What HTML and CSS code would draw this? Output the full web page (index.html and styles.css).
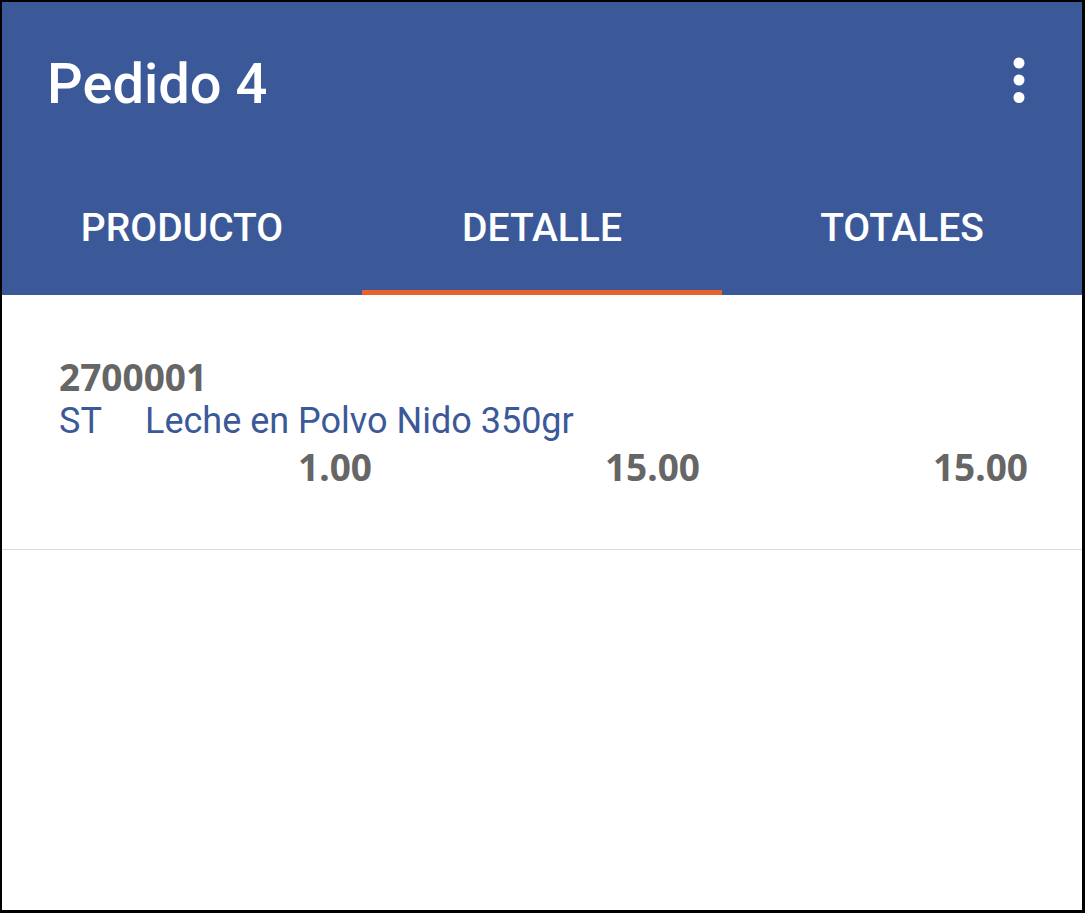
FILE: index.html
```html
<!DOCTYPE html>
<html lang="es">
<head>
<meta charset="utf-8">
<title>Pedido 4</title>
<link rel="stylesheet" href="styles.css">
</head>
<body>
<div class="app">
  <header class="appbar">
    <div class="toolbar">
      <h1 class="title">Pedido 4</h1>
      <svg class="kebab" width="24" height="48" viewBox="0 0 24 48" aria-hidden="true">
        <circle cx="12" cy="7" r="5.5" fill="#fff"/>
        <circle cx="12" cy="24" r="5.5" fill="#fff"/>
        <circle cx="12" cy="41.5" r="5.5" fill="#fff"/>
      </svg>
    </div>
    <nav class="tabs">
      <div class="tab">PRODUCTO</div>
      <div class="tab active">DETALLE</div>
      <div class="tab">TOTALES</div>
    </nav>
  </header>
  <main class="list">
    <div class="item">
      <div class="code">2700001</div>
      <div class="desc"><span class="unit">ST</span><span>Leche en Polvo Nido 350gr</span></div>
      <div class="nums">
        <span>1.00</span>
        <span>15.00</span>
        <span>15.00</span>
      </div>
    </div>
  </main>
</div>
</body>
</html>
```

FILE: styles.css
```css
html, body {
  margin: 0;
  padding: 0;
  background: #000;
}
body {
  padding: 2px 3px 3px 2px;
  font-family: Roboto, "Liberation Sans", sans-serif;
}
.app {
  width: 1080px;
  height: 908px;
  background: #fff;
  display: flex;
  flex-direction: column;
}
.appbar {
  background: #3b5998;
  color: #fff;
}
.toolbar {
  height: 155px;
  display: flex;
  align-items: center;
  justify-content: space-between;
  padding: 0 51px 0 45px;
}
.title {
  margin: 9px 0 0 0;
  font-size: 56px;
  font-weight: 500;
  line-height: 1;
}
.kebab {
  display: block;
  margin-top: 0;
}
.tabs {
  height: 138px;
  display: grid;
  grid-template-columns: repeat(3, 1fr);
}
.tab {
  display: flex;
  align-items: center;
  justify-content: center;
  padding-top: 10px;
  font-size: 39px;
  font-weight: 500;
  line-height: 1;
  box-sizing: border-box;
  border-bottom: 5px solid transparent;
}
.tab.active {
  border-bottom-color: #e8612c;
}
.item {
  padding: 60px 54px 60px 57px;
  border-bottom: 1px solid #dcdcdc;
}
.code {
  font-family: "Noto Sans", "Open Sans", sans-serif;
  font-weight: 700;
  font-size: 37px;
  line-height: 44px;
  color: #666;
}
.desc {
  font-size: 36px;
  line-height: 44px;
  color: #3b5998;
  display: flex;
}
.unit {
  width: 86px;
  flex: none;
}
.nums {
  margin-top: 2px;
  display: grid;
  grid-template-columns: 313px 328px 328px;
  font-family: "Noto Sans", "Open Sans", sans-serif;
  font-weight: 700;
  font-size: 37px;
  line-height: 44px;
  color: #666;
  text-align: right;
}
```
